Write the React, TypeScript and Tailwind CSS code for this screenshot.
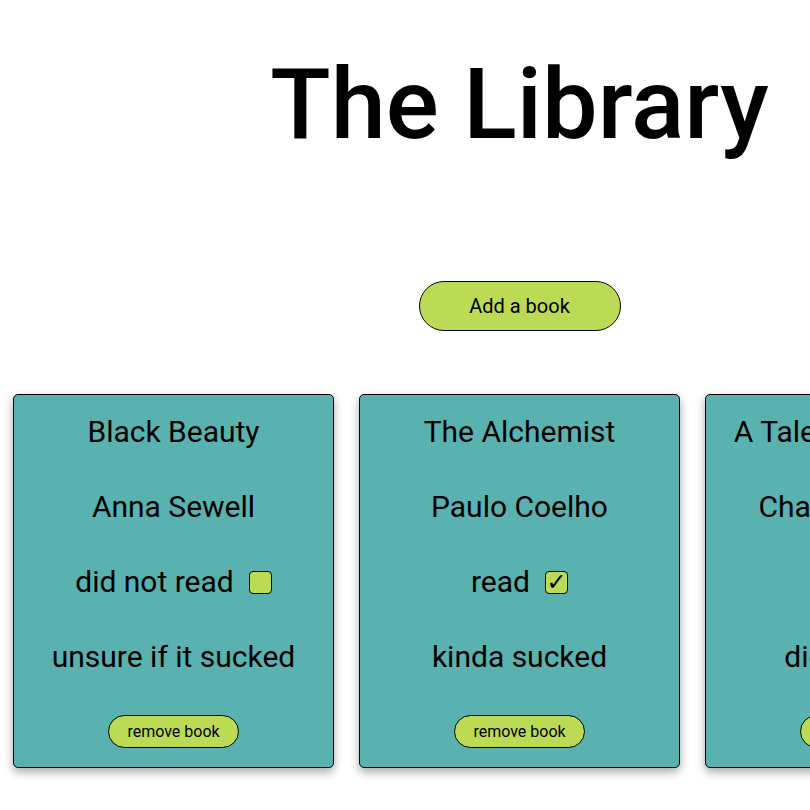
import { FC } from "react";

interface Book {
  id: number;
  title: string;
  author: string;
  read: boolean;
  verdict: string;
}

const books: Book[] = [
  { id: 1, title: "Black Beauty", author: "Anna Sewell", read: false, verdict: "unsure if it sucked" },
  { id: 2, title: "The Alchemist", author: "Paulo Coelho", read: true, verdict: "kinda sucked" },
  { id: 3, title: "A Tale of Two Cities", author: "Charles Dickens", read: true, verdict: "did not suck" },
];

const BookCard: FC<{ book: Book }> = ({ book }) => {
  return (
    <div className="w-[321px] shrink-0 flex flex-col items-center gap-[41px] pt-[20px] pb-[19px] bg-[#59b2af] border border-black rounded-[5px] shadow-[0_4px_10px_rgba(0,0,0,0.35)] text-[30px] leading-[34px] text-black">
      <p>{book.title}</p>
      <p>{book.author}</p>
      <div className="flex items-center gap-[15px]">
        <span>{book.read ? "read" : "did not read"}</span>
        <span className="w-[23px] h-[23px] flex items-center justify-center bg-[#bcdb55] border border-black rounded-[4px] text-[24px] leading-none font-bold font-['DejaVu_Sans',sans-serif]">
          {book.read ? "✓" : ""}
        </span>
      </div>
      <p>{book.verdict}</p>
      <button className="w-[131px] h-[33px] bg-[#bcdb55] border border-black rounded-full text-[16px] leading-none">
        remove book
      </button>
    </div>
  );
};

export default function App() {
  return (
    <div className="w-max min-w-full flex flex-col items-center bg-white font-['Roboto',sans-serif] text-black">
      <h1 className="mt-[43px] text-[99px] leading-[122px] font-medium">The Library</h1>
      <button className="mt-[116px] w-[202px] h-[50px] bg-[#bcdb55] border border-black rounded-full text-[20px]">
        Add a book
      </button>
      <div className="flex gap-[25px] p-[13px] mt-[50px]">
        {books.map((book) => (
          <BookCard key={book.id} book={book} />
        ))}
      </div>
    </div>
  );
}
